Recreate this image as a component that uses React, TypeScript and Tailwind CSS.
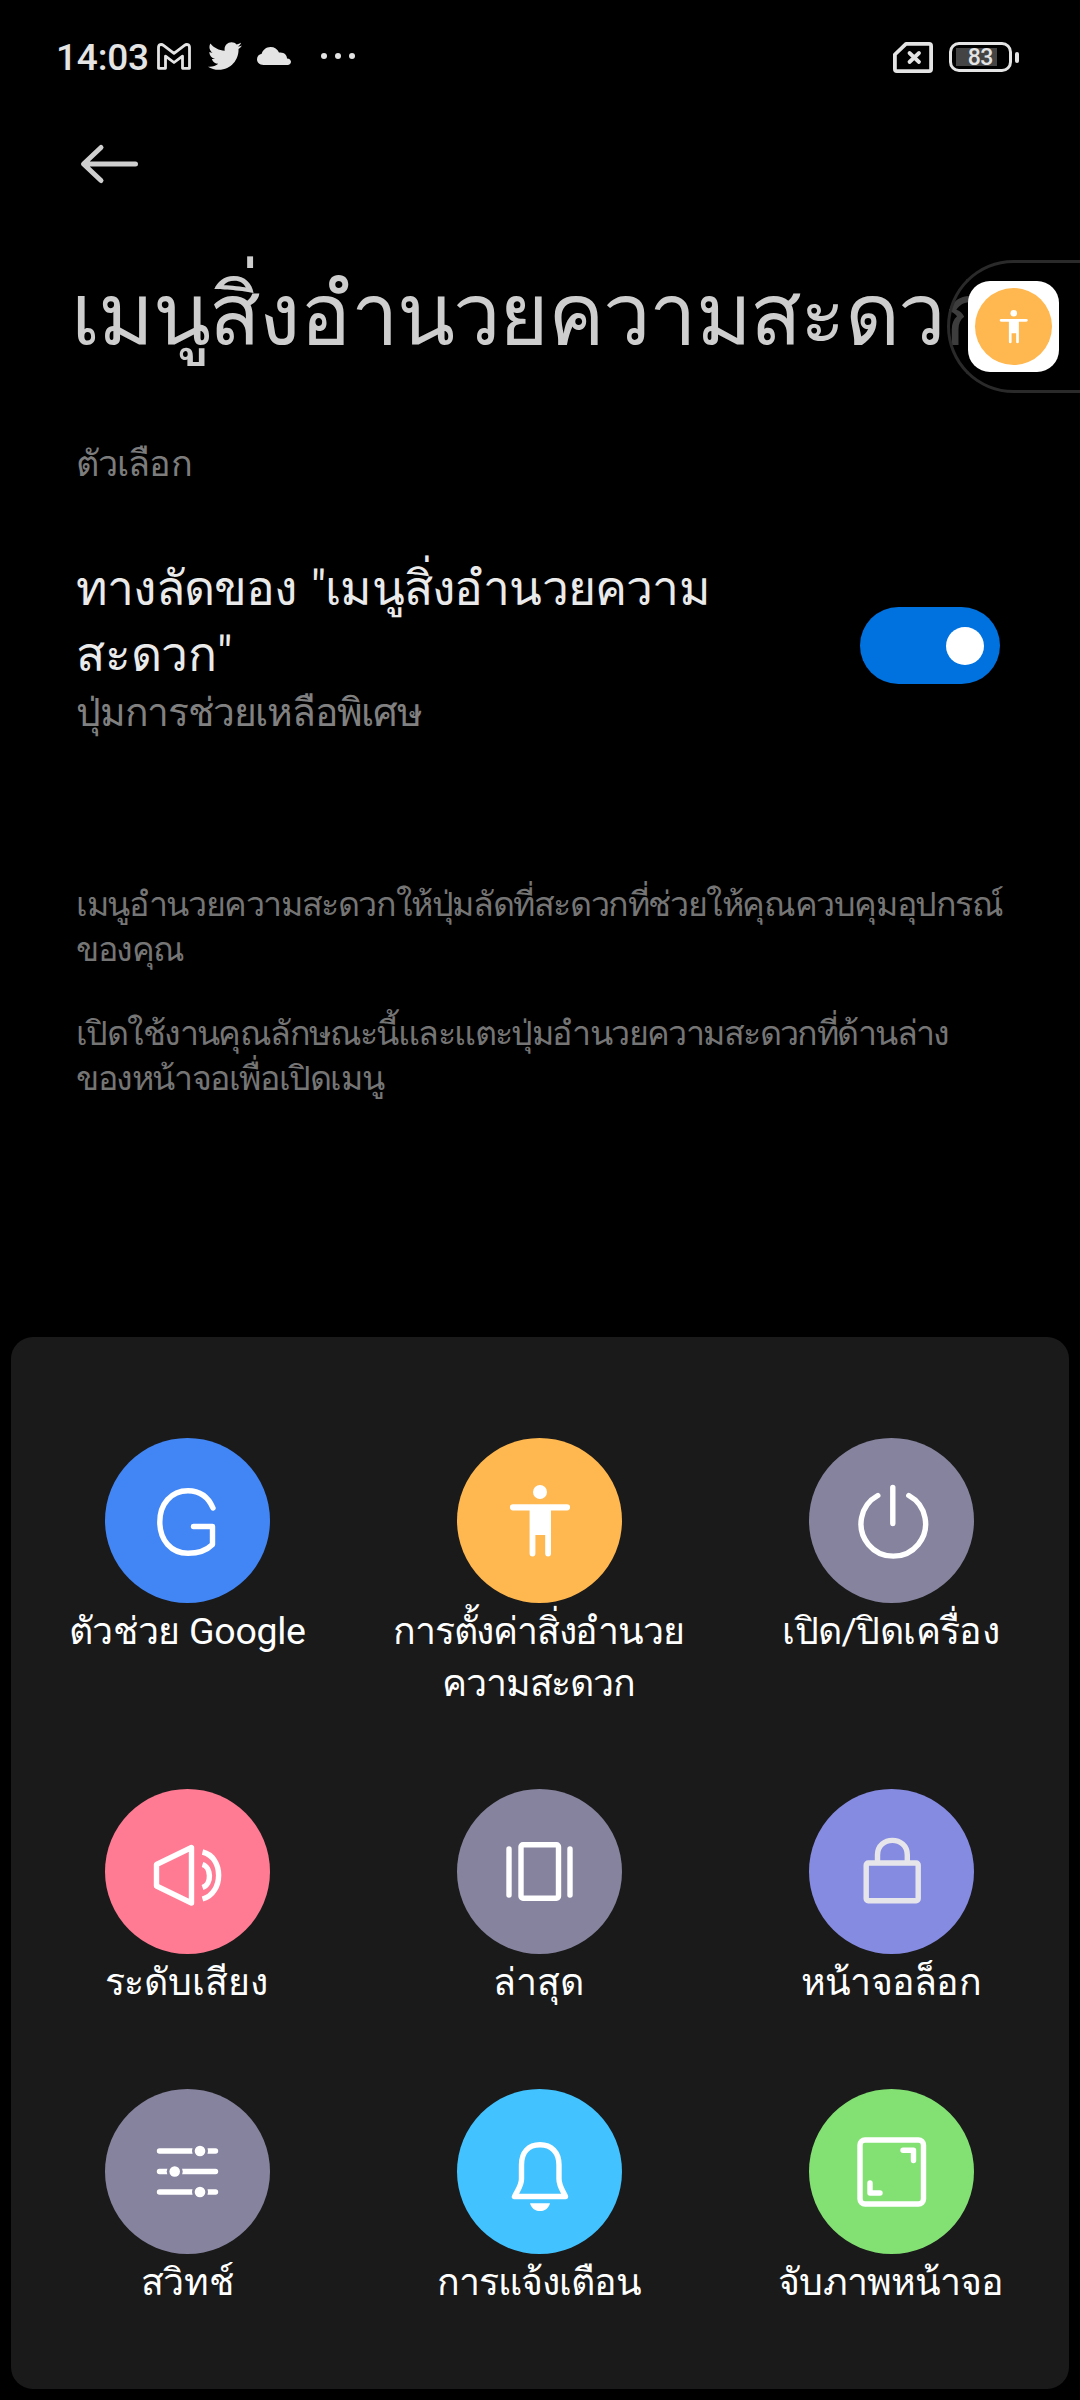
import type { ReactNode } from 'react';
import { FaTwitter } from 'react-icons/fa';

const line = {
  fill: 'none',
  stroke: 'currentColor',
  strokeWidth: 5.4,
  strokeLinecap: 'round',
  strokeLinejoin: 'round',
} as const;

function PersonShape() {
  return (
    <g fill="currentColor">
      <circle cx="83" cy="54" r="7" />
      <path d="M56 66.2H110a3.1 3.1 0 0 1 0 6.2H94V115.5a2.9 2.9 0 0 1-5.8 0V97H78.4V115.5a2.9 2.9 0 0 1-5.8 0V72.4H56a3.1 3.1 0 0 1 0-6.2Z" />
    </g>
  );
}

const sliderRows = [
  { y: 62, x: 95 },
  { y: 82.5, x: 69.7 },
  { y: 103, x: 95 },
];

type Action = { label: string[]; text: string; circle: string; icon: ReactNode };

const actions: Action[] = [
  {
    label: ['ตัวช่วย Google'],
    text: 'text-[37.5px] tracking-[-0.3px]',
    circle: 'bg-[#4286f6]',
    icon: <path {...line} d="M108 70C103 58.500 94 52.800 83 52.800C66 52.800 54.800 66 54.800 84C54.800 102 66 115.300 83 115.300C93 115.300 101.500 112.500 107.500 106.500V88.500H88.500" />,
  },
  {
    label: ['การตั้งค่าสิ่งอำนวย', 'ความสะดวก'],
    text: 'text-[37.5px] tracking-[-1.2px] pr-[2px]',
    circle: 'bg-[#ffb74f]',
    icon: <PersonShape />,
  },
  {
    label: ['เปิด/ปิดเครื่อง'],
    text: 'text-[37.5px] tracking-[-0.6px] pr-[2px]',
    circle: 'bg-[#86839f]',
    icon: <path {...line} d="M83.800 49.500V85.500M68.800 57.500A32.300 32.300 0 1 0 99.800 57.500" />,
  },
  {
    label: ['ระดับเสียง'],
    text: 'text-[37.5px] tracking-[-0.1px] pr-[2px]',
    circle: 'bg-[#ff7b93]',
    icon: (
      <g {...line} strokeLinecap="butt">
        <path d="M51.500 75.500L86.500 58.500V114L51.500 97Z" />
        <path d="M97.500 75.500C106 78 107.500 95 97.500 98.500M97.500 63C119 68 119 104 97.500 110" />
      </g>
    ),
  },
  {
    label: ['ล่าสุด'],
    text: 'text-[37.5px] tracking-[-0.1px] pr-[2px]',
    circle: 'bg-[#86839f]',
    icon: (
      <g {...line}>
        <rect x="64" y="55.800" width="37.500" height="53.500" rx="2" />
        <path d="M52 60V106M113 60V106" />
      </g>
    ),
  },
  {
    label: ['หน้าจอล็อก'],
    text: 'text-[37.5px] tracking-[-0.7px] pr-[2px]',
    circle: 'bg-[#868be2] text-[#e6e6ea]',
    icon: (
      <g {...line}>
        <rect x="57.200" y="74" width="52" height="37.800" rx="2" />
        <path d="M68.500 73V66C68.500 46.500 98.300 46.500 98.300 66V73" />
      </g>
    ),
  },
  {
    label: ['สวิทช์'],
    text: 'text-[37.5px] tracking-[-0.3px]',
    circle: 'bg-[#86839f]',
    icon: (
      <g>
        {sliderRows.map((r) => (
          <g key={r.y}>
            <path {...line} d={`M54.500 ${r.y}H110.500`} />
            <circle cx={r.x} cy={r.y} r="8" fill="#86839f" />
            <circle cx={r.x} cy={r.y} r="5.300" fill="currentColor" />
          </g>
        ))}
      </g>
    ),
  },
  {
    label: ['การแจ้งเตือน'],
    text: 'text-[37.5px] tracking-[-1px] pr-[1px]',
    circle: 'bg-[#42c3ff]',
    icon: (
      <g>
        <path {...line} d="M57.500 107.500H108.500C106 102 102 97 102 90V76C102 63 94.500 55.800 83 55.800S64.500 63 64.500 76V90C64.500 97 60 102 57.500 107.500Z" />
        <path d="M73 114.200H93C91.500 119 88.500 122 83 122S74.500 119 73 114.200Z" fill="currentColor" />
      </g>
    ),
  },
  {
    label: ['จับภาพหน้าจอ'],
    text: 'text-[37.5px] tracking-[-0.9px] pr-[2px]',
    circle: 'bg-[#83e174]',
    icon: (
      <g {...line}>
        <rect x="51" y="51" width="63.500" height="64" rx="5" />
        <path d="M94 61.200H104.500V71.500M61 94V104H71" />
      </g>
    ),
  },
];

function StatusBar() {
  return (
    <div className="flex h-[112px] items-center pl-[56px] text-[#e4e4e4]">
      <span className="pt-[4px] text-[37px] leading-[50px] font-medium tracking-[-0.2px]">14:03</span>
      <svg viewBox="0 0 34 27" className="ml-[8px] h-[27px] w-[34px]" fill="none" stroke="currentColor" strokeWidth="2.8" strokeLinejoin="round">
        <path d="M1.500 4.500C1.500 1.200 4.500 .9 6.500 2.400L17 10.300L27.500 2.400C29.500 .9 32.500 1.200 32.500 4.500V25.300H25.500V13.200L17 19.500L8.500 13.200V25.300H1.500Z" />
      </svg>
      <FaTwitter className="ml-[17px] h-[34px] w-[34px]" />
      <svg viewBox="0 0 34 18" className="ml-[15px] h-[18px] w-[34px]" fill="currentColor">
        <path d="M6.500 18C2.500 18 0 15.500 0 12.300C0 9.500 2 7.200 4.700 6.800C5.800 2.800 9.200 0 13.500 0C17.500 0 20.500 2 22 5.500C27 4.800 30 8 30 11.400C32.500 11.600 34 13 34 14.800C34 16.800 32.500 18 30.500 18Z" />
      </svg>
      <div className="ml-[30px] flex gap-[8px]">
        <i className="size-[6px] rounded-full bg-current" />
        <i className="size-[6px] rounded-full bg-current" />
        <i className="size-[6px] rounded-full bg-current" />
      </div>
      <svg viewBox="0 0 40 31" className="ml-auto mt-[3px] h-[31px] w-[40px]" fill="none" stroke="currentColor" strokeWidth="3.800" strokeLinejoin="round">
        <path d="M13 1.900H36.100A2 2 0 0 1 38.100 3.900V27.100A2 2 0 0 1 36.100 29.100H3.900A2 2 0 0 1 1.900 27.100V12.500Z" />
        <path d="M16.500 11L26 20M26 11L16.500 20" strokeLinecap="round" />
      </svg>
      <div className="mt-[2px] ml-[16px] mr-[61px] flex items-center gap-[3px]">
        <div className="flex h-[30px] w-[63px] items-center rounded-[10px] border-[3px] border-current pl-[4px]">
          <div className="flex h-[18px] w-[41px] items-center justify-end bg-[#444] pr-[4px]">
            <span className="pt-px text-[23px] leading-[18px] font-medium tracking-[-0.4px]">83</span>
          </div>
        </div>
        <i className="h-[11px] w-[4px] rounded-full bg-current" />
      </div>
    </div>
  );
}

export default function App() {
  return (
    <main className="relative flex h-[2400px] w-[1080px] flex-col overflow-hidden bg-black font-[Roboto,sans-serif] whitespace-nowrap">
      <StatusBar />
      <header className="flex h-[104px] items-center pl-[78px] text-[#cfcfcf]">
        <svg viewBox="0 0 64 44" className="h-[44px] w-[64px]" fill="none" stroke="currentColor" strokeWidth="5" strokeLinecap="round" strokeLinejoin="round">
          <path d="M57.500 22H6M23 5.500L5.500 22L23 38.500" />
        </svg>
      </header>

      <h1 className="mt-[39px] ml-[71px] text-[85px] leading-[120px] tracking-[-1.7px] text-[#cecece]">เมนูสิ่งอำนวยความสะดวก</h1>

      <section className="px-[76px]">
        <p className="mt-[65px] text-[36px] leading-[48px] tracking-[-0.9px] text-[#7c7c7c]">ตัวเลือก</p>
        <div className="mt-[68px] flex items-start justify-between">
          <div>
            <h2 className="text-[48px] leading-[66px] tracking-[-0.8px] text-[#eaeaea]">
              <span className="[word-spacing:3px]">ทางลัดของ "เมนูสิ่งอำนวยความ</span>
              <br />
              <span className="tracking-[-0.2px]">สะดวก"</span>
            </h2>
            <p className="text-[39px] leading-[50px] tracking-[-1.2px] text-[#808080]">ปุ่มการช่วยเหลือพิเศษ</p>
          </div>
          <div className="mt-[51px] mr-[4px] flex h-[77px] w-[140px] items-center justify-end rounded-full bg-[#0072df] pr-[16px]">
            <i className="size-[38px] rounded-full bg-white" />
          </div>
        </div>

        <div className="mt-[144px] flex flex-col gap-[39px] text-[34px] leading-[45px] tracking-[-1.4px] text-[#757575]">
          <p>
            เมนูอำนวยความสะดวกให้ปุ่มลัดที่สะดวกที่ช่วยให้คุณควบคุมอุปกรณ์
            <br />
            ของคุณ
          </p>
          <p>
            <span className="tracking-[-1.57px]">เปิดใช้งานคุณลักษณะนี้และแตะปุ่มอำนวยความสะดวกที่ด้านล่าง</span>
            <br />
            ของหน้าจอเพื่อเปิดเมนู
          </p>
        </div>
      </section>

      <section className="mx-[11px] mt-auto mb-[11px] grid h-[1052px] grid-cols-3 content-start gap-y-[80.4px] rounded-[22px] bg-[#1a1a1a] pt-[101px] pr-[1px]">
        {actions.map((a) => (
          <div key={a.label[0]} className="flex flex-col items-center text-white">
            <div className={`size-[165px] rounded-full ${a.circle}`}>
              <svg viewBox="0 0 165 165" className="size-full">{a.icon}</svg>
            </div>
            <div className={`mt-[2px] text-center leading-[52px] ${a.text}`}>
              {a.label.map((l) => (
                <p key={l}>{l}</p>
              ))}
            </div>
          </div>
        ))}
      </section>

      {/* Floating shortcut docked to the right edge */}
      <div className="absolute top-[260px] right-0 flex h-[133px] w-[133px] items-center rounded-l-full border-3 border-r-0 border-[#2a2a2a] bg-black/70 pl-[18px]">
        <div className="flex size-[91px] items-center justify-center rounded-[22px] bg-white">
          <div className="size-[77px] rounded-full bg-[#ffb74f] text-white">
            <svg viewBox="0 0 165 165" className="size-full"><PersonShape /></svg>
          </div>
        </div>
      </div>
    </main>
  );
}
